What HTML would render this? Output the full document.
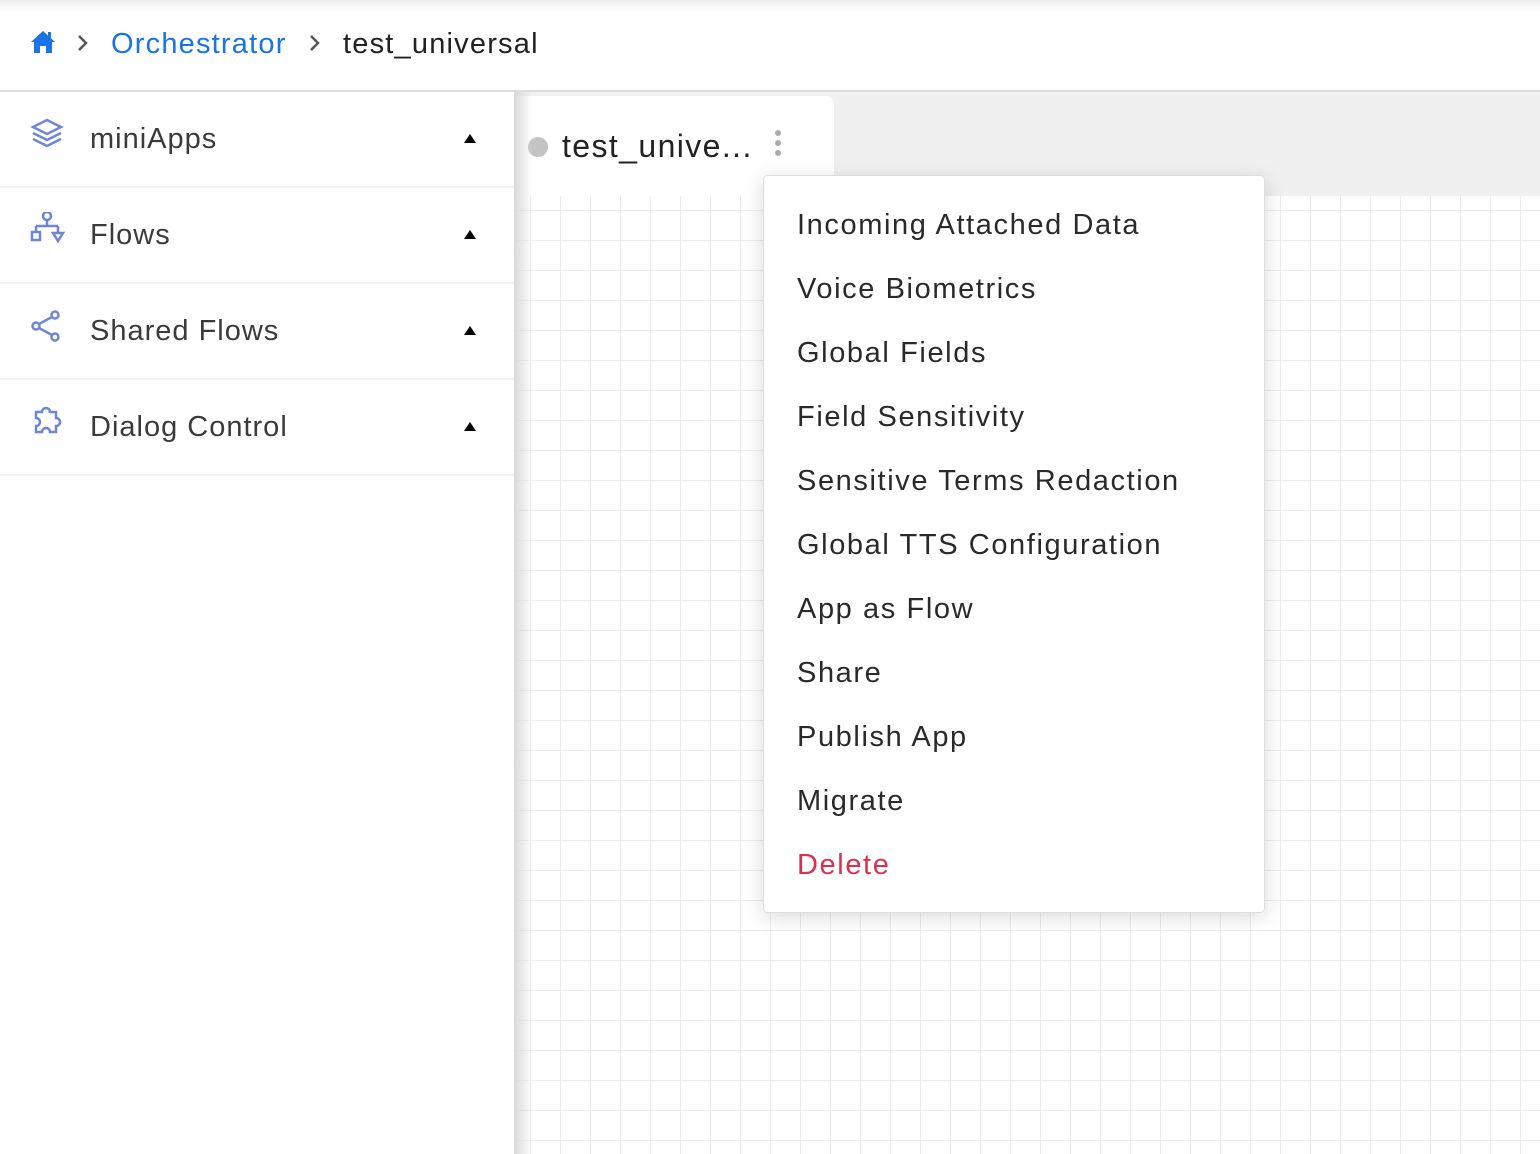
<!DOCTYPE html>
<html><head><meta charset="utf-8"><style>
*{margin:0;padding:0;box-sizing:border-box}
body{width:1540px;height:1154px;overflow:hidden;background:#fff;font-family:"Liberation Sans",sans-serif;position:relative}
.top{position:absolute;left:0;top:0;width:1540px;height:90px;background:#fff;background:linear-gradient(#ececec,#fff 12px)}
.bc{position:absolute;top:27px;font-size:29px;line-height:34px;letter-spacing:1.2px}
.line{position:absolute;top:90px;left:0;width:1540px;height:2px;background:#dcdcdc}
.side{position:absolute;left:0;top:92px;width:514px;height:1062px;background:#fff}
.row{position:absolute;left:0;width:514px;height:96px;border-bottom:2px solid #eef3fb}
.row span{position:absolute;left:90px;top:31px;font-size:29px;color:#3b3b3b;letter-spacing:1px}
.row .tri{position:absolute;left:464px;top:42px;width:0;height:0;border-left:6px solid transparent;border-right:6px solid transparent;border-bottom:9px solid #000}
.row svg{position:absolute;left:28px;top:24px}
.canvas{position:absolute;left:514px;top:92px;width:1026px;height:1062px;background:#f0f0f0}
.grid{position:absolute;left:0;top:104px;width:1026px;height:958px;background-color:#fff;background-image:linear-gradient(#ececec 1px,transparent 1px),linear-gradient(90deg,#ececec 1px,transparent 1px);background-size:30px 30px;background-position:16px 14px}
.shadow{position:absolute;left:0;top:0;width:18px;height:1062px;background:linear-gradient(90deg,#d8d8d8,rgba(255,255,255,0))}
.tab{position:absolute;left:2px;top:4px;width:318px;height:100px;background:#fff;border-radius:0 8px 0 0}
.menu{position:absolute;left:763px;top:175px;width:502px;height:738px;background:#fff;border:1px solid #ddd;border-radius:5px;box-shadow:0 4px 20px rgba(0,0,0,.15)}
.menu div{position:absolute;left:33px;font-size:29px;color:#2a2a2a;letter-spacing:1.6px;margin-top:2px}
</style></head><body>
<div class="top"></div>
<svg style="position:absolute;left:30px;top:30px" width="26" height="24" viewBox="0 0 26 24"><path d="M13 1 L1 12 L4 12 L4 23 L10 23 L10 16 L16 16 L16 23 L22 23 L22 12 L25 12 Z" fill="#1a73e8"/><rect x="18" y="2" width="3" height="6" fill="#1a73e8"/></svg>
<svg style="position:absolute;left:76px;top:34px" width="14" height="18"><path d="M3 2 L10 9 L3 16" stroke="#555" stroke-width="2.5" fill="none"/></svg>
<div class="bc" style="left:111px;color:#1a73e8">Orchestrator</div>
<svg style="position:absolute;left:308px;top:34px" width="14" height="18"><path d="M3 2 L10 9 L3 16" stroke="#555" stroke-width="2.5" fill="none"/></svg>
<div class="bc" style="left:343px;color:#222">test_universal</div>
<div class="line"></div>
<div class="side">
<div class="row" style="top:0"><svg width="38" height="40" viewBox="0 0 38 40" fill="none" stroke="#6f86d6" stroke-width="2.5"><path d="M19 4 L33 11 L19 18 L5 11 Z"/><path d="M5 17 L19 24 L33 17"/><path d="M5 23 L19 30 L33 23"/></svg><span>miniApps</span><i class="tri"></i></div>
<div class="row" style="top:96px"><svg width="38" height="40" viewBox="0 0 38 40" fill="none" stroke="#6f86d6" stroke-width="2.5"><circle cx="19" cy="4" r="4"/><path d="M19 8 V14 M8 14 H30 M8 14 V20 M30 14 V20"/><rect x="4" y="20" width="8" height="8"/><path d="M25 21 H35 L30 29 Z"/></svg><span>Flows</span><i class="tri"></i></div>
<div class="row" style="top:192px"><svg width="38" height="40" viewBox="0 0 38 40" fill="none" stroke="#6f86d6" stroke-width="2.5"><circle cx="27" cy="7" r="3.5"/><circle cx="8" cy="18" r="3.5"/><circle cx="27" cy="29" r="3.5"/><path d="M11 16 L24 9 M11 20 L24 27"/></svg><span>Shared Flows</span><i class="tri"></i></div>
<div class="row" style="top:288px"><svg width="38" height="40" viewBox="0 0 38 40" fill="none" stroke="#6f86d6" stroke-width="2.5"><path d="M8 8 H14 A4 4 0 0 1 22 8 H28 V14 A4 4 0 0 1 28 22 V28 H22 A4 4 0 0 0 14 28 H8 V22 A4 4 0 0 0 8 14 Z"/></svg><span>Dialog Control</span><i class="tri"></i></div>
</div>
<div class="canvas">
<div class="grid"></div>
<div class="tab">
<div style="position:absolute;left:12px;top:41px;width:20px;height:20px;border-radius:50%;background:#c4c4c4"></div>
<div style="position:absolute;left:46px;top:32px;font-size:32px;color:#222;letter-spacing:1.4px">test_unive...</div>
<div style="position:absolute;left:259px;top:34px;width:6px;height:6px;border-radius:50%;background:#aaa;box-shadow:0 10px 0 #aaa,0 20px 0 #aaa"></div>
</div>
<div class="shadow"></div>
</div>
<div class="menu">
<div style="top:31px">Incoming Attached Data</div>
<div style="top:95px">Voice Biometrics</div>
<div style="top:159px">Global Fields</div>
<div style="top:223px">Field Sensitivity</div>
<div style="top:287px">Sensitive Terms Redaction</div>
<div style="top:351px">Global TTS Configuration</div>
<div style="top:415px">App as Flow</div>
<div style="top:479px">Share</div>
<div style="top:543px">Publish App</div>
<div style="top:607px">Migrate</div>
<div style="top:671px;color:#d9304f">Delete</div>
</div>
</body></html>
